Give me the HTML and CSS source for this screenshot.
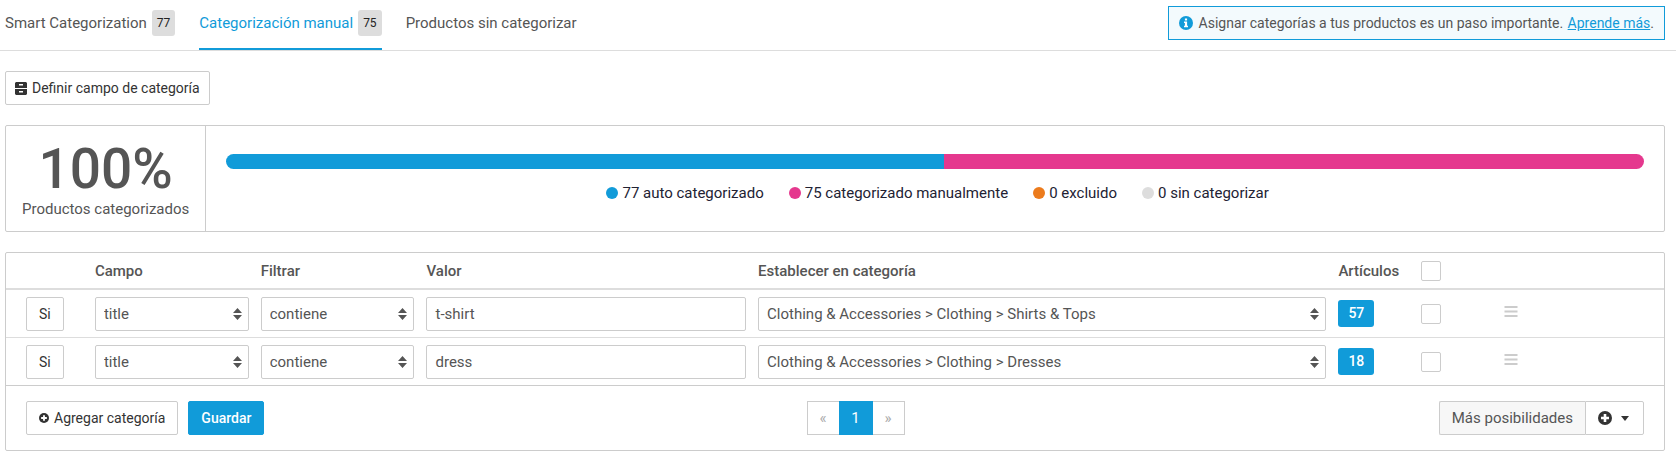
FILE: index.html
```
<!DOCTYPE html>
<html lang="es">
<head>
    <meta charset="UTF-8" />
    <meta name="viewport" content="width=device-width, initial-scale=1.0" />
    <title>Categorización manual</title>
    <link rel="stylesheet" href="styles.css">
</head>
<body>
    <header class="topbar">
        <nav class="tabs">
            <a href="#smart" class="tab">Smart Categorization <span class="count">77</span></a>
            <a href="#manual" class="tab active">Categorización manual <span class="count">75</span></a>
            <a href="#none" class="tab">Productos sin categorizar</a>
        </nav>
        <p class="notice">
            <svg class="icon-info" viewBox="0 0 14 14"><circle cx="7" cy="7" r="7" fill="#119bd9"/><path d="M5.9 2.6h2.2v1.8H5.9zM5 5.6h3.1v4.1H9v1.5H5V9.700h.9V7.100H5z" fill="#fff"/></svg>
            <span>Asignar categorías a tus productos es un paso importante. <a href="#more">Aprende más</a>.</span>
        </p>
    </header>

    <main class="content">
        <button type="button" class="btn btn-field">
            <svg class="icon-cabinet" viewBox="0 0 12 13"><path d="M1 0h10l1 1v5H0V1zM0 7h12v5l-1 1H1l-1-1z" fill="#333"/><path d="M4 2h4v1.500H4zM4 9h4v1.500H4z" fill="#fff"/></svg>
            Definir campo de categoría
        </button>

        <section class="panel summary">
            <div class="total">
                <strong class="percent">100%</strong>
                <span>Productos categorizados</span>
            </div>
            <div class="progress-box">
                <div class="progress">
                    <div class="bar bg-blue" style="width: 50.66%"></div>
                    <div class="bar bg-pink" style="width: 49.34%"></div>
                </div>
                <ul class="legend">
                    <li><span class="dot bg-blue"></span>77 auto categorizado</li>
                    <li><span class="dot bg-pink"></span>75 categorizado manualmente</li>
                    <li><span class="dot bg-orange"></span>0 excluido</li>
                    <li><span class="dot bg-gray"></span>0 sin categorizar</li>
                </ul>
            </div>
        </section>

        <section class="panel">
            <table class="rules">
                <colgroup>
                    <col class="w5"><col class="w10"><col class="w10"><col class="w20">
                    <col class="w35"><col class="w5"><col class="w5"><col class="w10">
                </colgroup>
                <thead>
                    <tr>
                        <th></th>
                        <th>Campo</th>
                        <th>Filtrar</th>
                        <th>Valor</th>
                        <th>Establecer en categoría</th>
                        <th>Artículos</th>
                        <th><input type="checkbox" class="check" aria-label="Todos"></th>
                        <th></th>
                    </tr>
                </thead>
                <tbody>
                    <tr>
                        <td><button type="button" class="btn">Si</button></td>
                        <td><select class="field" aria-label="Campo"><option>title</option></select></td>
                        <td><select class="field" aria-label="Filtrar"><option>contiene</option></select></td>
                        <td><input type="text" class="field" aria-label="Valor" value="t-shirt"></td>
                        <td><select class="field" aria-label="Establecer en categoría"><option>Clothing &amp; Accessories &gt; Clothing &gt; Shirts &amp; Tops</option></select></td>
                        <td><span class="items">57</span></td>
                        <td><input type="checkbox" class="check" aria-label="Seleccionar"></td>
                        <td><svg class="icon-drag" viewBox="0 0 13 13"><path d="M0 1h13v2H0zM0 5.500h13v2H0zM0 10h13v2H0z" fill="#ccc"/></svg></td>
                    </tr>
                    <tr>
                        <td><button type="button" class="btn">Si</button></td>
                        <td><select class="field" aria-label="Campo"><option>title</option></select></td>
                        <td><select class="field" aria-label="Filtrar"><option>contiene</option></select></td>
                        <td><input type="text" class="field" aria-label="Valor" value="dress"></td>
                        <td><select class="field" aria-label="Establecer en categoría"><option>Clothing &amp; Accessories &gt; Clothing &gt; Dresses</option></select></td>
                        <td><span class="items">18</span></td>
                        <td><input type="checkbox" class="check" aria-label="Seleccionar"></td>
                        <td><svg class="icon-drag" viewBox="0 0 13 13"><path d="M0 1h13v2H0zM0 5.500h13v2H0zM0 10h13v2H0z" fill="#ccc"/></svg></td>
                    </tr>
                </tbody>
            </table>

            <footer class="actions">
                <div class="left">
                    <button type="button" class="btn">
                        <svg class="icon-add" viewBox="0 0 14 14"><circle cx="7" cy="7" r="7" fill="#333"/><path d="M5.700 3h2.600v2.700H11v2.600H8.300V11H5.700V8.300H3V5.700h2.700z" fill="#fff"/></svg>
                        Agregar categoría
                    </button>
                    <button type="button" class="btn btn-primary">Guardar</button>
                </div>
                <nav class="pages">
                    <a href="#prev">«</a>
                    <a href="#1" class="current">1</a>
                    <a href="#next">»</a>
                </nav>
                <div class="more">
                    <span class="more-label">Más posibilidades</span>
                    <button type="button" class="btn more-btn" aria-label="Más posibilidades">
                        <svg class="icon-plus" viewBox="0 0 14 14"><circle cx="7" cy="7" r="7" fill="#333"/><path d="M5.700 3h2.600v2.700H11v2.600H8.300V11H5.700V8.300H3V5.700h2.700z" fill="#fff"/></svg>
                        <span class="caret"></span>
                    </button>
                </div>
            </footer>
        </section>
    </main>
</body>
</html>
```
FILE: styles.css
```
* {
    box-sizing: border-box;
}
body {
    font-family: Roboto, Arial, sans-serif;
    font-size: 15px;
    line-height: 20px;
    margin: 0;
    color: #555;
    background-color: #fff;
}
.topbar {
    display: flex;
    justify-content: space-between;
    align-items: flex-start;
    padding: 0 11px 0 5px;
    border-bottom: 1px solid #ddd;
}
.tabs {
    display: flex;
    gap: 24px;
}
.tab {
    display: flex;
    align-items: center;
    gap: 5px;
    height: 50px;
    padding-bottom: 2px;
    border-bottom: 2px solid transparent;
    color: #555;
    text-decoration: none;
}
.tab.active {
    color: #119bd9;
    border-color: #119bd9;
}
.count {
    padding: 3px 5px;
    border-radius: 3px;
    background-color: #ddd;
    color: #222;
    font-size: 12px;
}
.notice {
    display: flex;
    align-items: center;
    gap: 6px;
    margin: 6px 0 0;
    padding: 6px 10px;
    border: 1px solid #119bd9;
    background-color: #f3fafd;
    font-size: 14px;
}
.notice a {
    margin-left: 1px;
    color: #119bd9;
}
.icon-info,
.icon-plus {
    width: 14px;
    height: 14px;
}
.icon-cabinet {
    width: 12px;
    height: 13px;
}
.icon-add {
    width: 10px;
    height: 10px;
}
.icon-drag {
    display: block;
    width: 14px;
    height: 13px;
    margin-bottom: 4px;
}
.content {
    padding: 20px 11px 0 5px;
}
.btn {
    display: inline-flex;
    align-items: center;
    gap: 5px;
    height: 34px;
    padding: 0 12px;
    border: 1px solid #ccc;
    border-radius: 2px;
    background-color: #fff;
    color: #333;
    font-family: inherit;
    font-size: 14px;
    cursor: pointer;
}
.btn:hover {
    background-color: #f7f7f7;
}
.btn-field {
    padding: 0 9px;
}
.btn-primary,
.btn-primary:hover {
    border-color: #119bd9;
    background-color: #119bd9;
    color: #fff;
    font-weight: 500;
}
.panel {
    margin-top: 20px;
    border: 1px solid #ccc;
    border-radius: 2px;
}
.summary {
    display: flex;
}
.total {
    display: flex;
    flex-direction: column;
    padding: 13px 16px 12px;
    border-right: 1px solid #ccc;
    text-align: center;
}
.percent {
    font-size: 55px;
    line-height: 60px;
    font-weight: 500;
}
.progress-box {
    flex: 1;
    padding: 28px 20px 0;
}
.progress {
    display: flex;
    height: 15px;
    border-radius: 8px;
    overflow: hidden;
}
.bg-blue {
    background-color: #119bd9;
}
.bg-pink {
    background-color: #e5388e;
}
.bg-orange {
    background-color: #ec7b1c;
}
.bg-gray {
    background-color: #ddd;
}
.legend {
    display: flex;
    justify-content: center;
    gap: 25px;
    margin: 14px 0 0;
    padding: 0 0 0 5px;
    list-style: none;
    color: #223;
}
.legend li {
    display: flex;
    align-items: center;
    gap: 4px;
}
.dot {
    width: 12px;
    height: 12px;
    border-radius: 50%;
}
.rules {
    width: 100%;
    table-layout: fixed;
    border-collapse: separate;
    border-spacing: 0;
}
.w5 {
    width: 5%;
}
.w10 {
    width: 10%;
}
.w20 {
    width: 20%;
}
.w35 {
    width: 35%;
}
.rules th {
    height: 37px;
    padding: 0 6px;
    border-bottom: 2px solid #ddd;
    font-weight: 500;
    text-align: left;
}
.rules td {
    height: 48px;
    padding: 0 6px;
    border-bottom: 1px solid #ddd;
}
.rules td:first-child {
    padding-left: 20px;
}
.rules tr:last-child td {
    border-color: #ccc;
}
.field {
    display: block;
    width: 100%;
    height: 34px;
    padding: 0 8px;
    border: 1px solid #ccc;
    border-radius: 2px;
    background-color: #fff;
    color: #555;
    font-family: inherit;
    font-size: 15px;
}
select.field {
    appearance: none;
    background-image: url("data:image/svg+xml,%3Csvg xmlns='http://www.w3.org/2000/svg' width='9' height='12'%3E%3Cpath d='M4.500 0L9 5H0zM0 7h9l-4.500 5z' fill='%23555'/%3E%3C/svg%3E");
    background-repeat: no-repeat;
    background-position: right 6px center;
}
.check {
    display: block;
    appearance: none;
    width: 20px;
    height: 20px;
    margin: 0;
    border: 1px solid #ccc;
    border-radius: 2px;
    background-color: #fff;
}
.check:checked {
    background-color: #119bd9;
}
.items {
    display: inline-block;
    padding: 3px 10px 4px;
    border-radius: 3px;
    background-color: #119bd9;
    color: #fff;
    font-size: 14px;
    font-weight: 500;
}
.actions {
    display: grid;
    grid-template-columns: 19fr auto 18fr;
    align-items: center;
    padding: 15px 20px;
}
.left {
    display: flex;
    gap: 10px;
}
.pages {
    display: flex;
    border: 1px solid #ccc;
}
.pages a {
    width: 31px;
    color: #aaa;
    line-height: 32px;
    text-align: center;
    text-decoration: none;
}
.pages .current {
    width: 34px;
    margin: -1px 0;
    line-height: 34px;
    background-color: #119bd9;
    color: #fff;
}
.more {
    display: flex;
    justify-self: end;
}
.more-label {
    padding: 6px 12px;
    border: 1px solid #ccc;
    border-right: none;
    border-radius: 2px 0 0 2px;
    background-color: #f7f7f7;
}
.more-btn {
    gap: 9px;
    padding: 0 14px 0 12px;
    border-radius: 0 2px 2px 0;
}
.caret {
    border-top: 5px solid #333;
    border-left: 4px solid transparent;
    border-right: 4px solid transparent;
}
```
